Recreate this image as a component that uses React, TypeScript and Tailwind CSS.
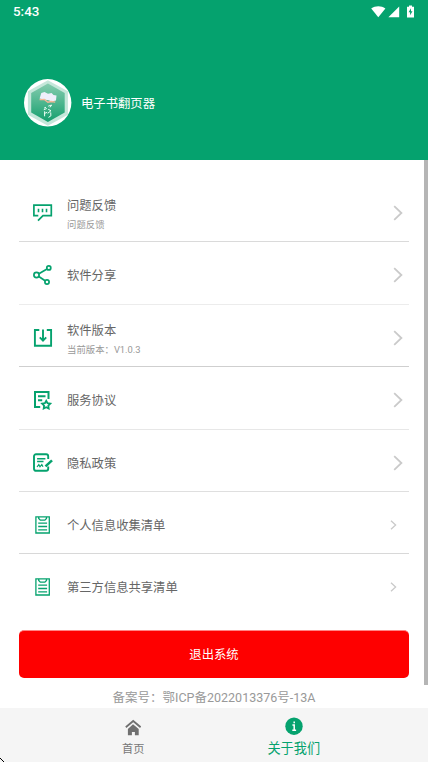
import type { ReactNode } from 'react';

const GREEN = '#05a26e';

function Feedback() {
  return (
    <svg width="20" height="20" viewBox="0 0 20 20" fill="none" stroke={GREEN} strokeWidth="1.7">
      <path d="M5.3 12.7H.9V2.2h17.4v10.5H10L5 17.7" />
      <path d="M5.5 5.7v3.6M9.5 5.7v3.6M13.5 5.7v3.6" strokeWidth="1.6" />
    </svg>
  );
}

function Share() {
  return (
    <svg width="20" height="20" viewBox="0 0 20 20" fill="none" stroke={GREEN} strokeWidth="1.7">
      <circle cx="3.5" cy="10" r="2.6" />
      <circle cx="15.8" cy="2.9" r="2" />
      <circle cx="14" cy="17" r="2.1" />
      <path d="M5.9 8.7 14 4M5.8 11.5l6.3 4.2" />
    </svg>
  );
}

function Version() {
  return (
    <svg width="20" height="20" viewBox="0 0 20 20" fill="none" stroke={GREEN} strokeWidth="1.9">
      <path d="M6.3 2H1.9v15.7h16.2V2h-4.3M10 1.5v11M6.8 9.4l3.2 3.3 3.2-3.3" />
    </svg>
  );
}

function Agreement() {
  return (
    <svg width="20" height="20" viewBox="0 0 20 20" fill="none" stroke={GREEN} strokeWidth="2">
      <path d="M7.2 17H2V2h13.5v7M5 6.3h7.5M5 10.2h4.2" />
      <path d="m13.2 10.8 1.3 2.4 2.8.5-2 2 .4 2.8-2.5-1.3-2.5 1.3.4-2.8-2-2 2.8-.5z" strokeWidth="1.8" />
    </svg>
  );
}

function Privacy() {
  return (
    <svg width="20" height="20" viewBox="0 0 20 20" fill="none" stroke={GREEN} strokeWidth="1.9">
      <path d="M15.2 13.5v2.3a2 2 0 0 1-2 2H3a2 2 0 0 1-2-2V3.3a2 2 0 0 1 2-2h10.2a2 2 0 0 1 2 2V6" />
      <path d="M4.1 5.7h8.3M4.1 8.5h6.4" strokeWidth="1.6" />
      <path d="m4 14 1.8-2.4 1.2 2.2 1.8-2.2 1.2 2.2" strokeWidth="1.2" />
      <path d="m12.5 13.3 6.5-6" strokeWidth="2.5" />
    </svg>
  );
}

function Checklist() {
  return (
    <svg width="20" height="20" viewBox="0 0 20 20" fill="none" stroke={GREEN} strokeWidth="1.3">
      <path d="M2.9 1.8h13.4v16.2H2.9z" />
      <path d="M5.7 2v1.4l1.6 1.7h4.6l1.6-1.7V2M5.2 8.2h8.9M5.2 11.5h8.9M5.2 14.8h8.9" />
    </svg>
  );
}

type Item = { title: string; detail?: string; icon: ReactNode; row: string; small?: boolean };

const items: Item[] = [
  { title: '问题反馈', detail: '问题反馈', icon: <Feedback />, row: 'h-[63px] border-[#dadada] pt-[5px]' },
  { title: '软件分享', icon: <Share />, row: 'h-[63px] border-[#ececec] pt-[4px]' },
  { title: '软件版本', detail: '当前版本：V1.0.3', icon: <Version />, row: 'h-[62px] border-[#cfcfcf] pt-[4px]' },
  { title: '服务协议', icon: <Agreement />, row: 'h-[63px] border-[#e7e7e7] pt-[4px]' },
  { title: '隐私政策', icon: <Privacy />, row: 'h-[62px] border-[#dfdfdf] pt-[5px]' },
  { title: '个人信息收集清单', icon: <Checklist />, row: 'h-[62px] border-[#d8d8d8] pt-[5px]', small: true },
  { title: '第三方信息共享清单', icon: <Checklist />, row: 'h-[63px] border-transparent pt-[4px]', small: true },
];

function Row({ item }: { item: Item }) {
  return (
    <li className={`flex items-center border-b pl-[14px] ${item.row}`}>
      {item.icon}
      <div className="ml-[14px] flex-1">
        <div className="pt-[2px] text-[12.3px] leading-[18px] text-[#666]">{item.title}</div>
        {item.detail && <div className="mt-[3px] text-[9.4px] leading-[13px] text-[#999]">{item.detail}</div>}
      </div>
      {item.small ? (
        <svg className="mr-[12px]" width="7" height="10" viewBox="0 0 7 10" fill="none" stroke="#cacaca" strokeWidth="1.3">
          <path d="m1 .7 4.6 4.3L1 9.3" />
        </svg>
      ) : (
        <svg className="mr-[6px]" width="10" height="16" viewBox="0 0 10 16" fill="none" stroke="#cacaca" strokeWidth="1.8">
          <path d="M1.2 1.2 8.4 8l-7.2 6.8" />
        </svg>
      )}
    </li>
  );
}

function Avatar() {
  return (
    <svg width="48" height="48" viewBox="0 0 48 48">
      <defs>
        <linearGradient id="hex" x1="0" y1="0" x2="0" y2="1">
          <stop offset="0" stopColor="#86ccaf" />
          <stop offset="1" stopColor="#149f6d" />
        </linearGradient>
      </defs>
      <circle cx="23.7" cy="23.8" r="23.7" fill="#fff" />
      <path d="M23.9 1.2 43.9 12.2v23.6L23.9 46.8 3.9 35.8V12.2z" fill="#c5e7da" />
      <path d="M23.9 4.6 40.7 14v19.6L23.9 43 7.2 33.6V14z" fill="url(#hex)" />
      <path d="m17.3 14 3.2-.9 3.5 1.7 3.6-.8 1.9 2 3 .6-.5 5-4.2.8-3.3-1.1-4.5-.9-4.4-1z" fill="#f0effb" />
      <path d="m15.6 20.6 4.7-.1 3.6 2.7 3.2-.7 4.1.6" fill="none" stroke="#f7b897" strokeWidth="1.3" />
      <path
        d="m20 29.2 2-1m2.2-1 3.4-1.2-1.6 2.4m-6.2 2.3 3-1.2m-2.2 2.8v5m0-2.9 2.6-1.1m1-3 2.8 1.4-3.3 2.6m3-.9.2 3.4-2.4 1.6"
        fill="none"
        stroke="#edfff6"
        strokeWidth="1"
      />
    </svg>
  );
}

export default function App() {
  return (
    <div className="flex h-[762px] w-[428px] flex-col overflow-hidden bg-white font-[Roboto,'Noto_Sans_CJK_SC',sans-serif]">
      <header className="h-[160px] shrink-0 bg-[#05a26e] text-white">
        <div className="flex h-6 items-center justify-between pr-[13px] pl-[13px]">
          <span className="pt-px text-[13.4px] font-medium">5:43</span>
          <svg width="44" height="14" viewBox="0 0 44 14" fill="#fff">
            <path d="M.2 3.6C4.4.4 10.2.4 14.4 3.6L7.3 12.2z" />
            <path d="M28.2 1.4v10.8H17.4z" />
            <path fillRule="evenodd" d="M36 1.8h2V.6h3v1.2h2v10.6h-7zm4 1.5-2.4 4h1.5v3l2.4-4h-1.5z" />
          </svg>
        </div>
        <div className="mt-[55px] flex h-12 items-center gap-[9px] pl-6">
          <Avatar />
          <span className="pt-[2px] text-[12.35px]">电子书翻页器</span>
        </div>
      </header>
      <main className="flex h-[548px] items-start">
        <div className="flex w-[424px] flex-col pr-[15px] pl-[19px]">
          <ul className="mt-[19px]">
            {items.map((item) => (
              <Row key={item.title} item={item} />
            ))}
          </ul>
          <button className="mt-[13px] h-[48px] rounded-[5px] border-t border-[#ff8585] bg-[#fe0000] pt-[2px] text-[12.35px] text-white">
            退出系统
          </button>
          <p className="mt-[11px] text-center text-[12.5px] leading-[18px] text-[#999]">备案号：鄂ICP备2022013376号-13A</p>
        </div>
        <div className="h-[525px] w-[4px] bg-[#b5b5b5]" />
      </main>
      <nav className="relative flex h-[54px] shrink-0 bg-[#f5f5f5] pr-[54px] pl-[53px]">
        <a className="flex flex-1 flex-col items-center pt-[11px] text-[#707070]">
          <svg width="16" height="17" viewBox="0 0 16 17" fill="currentColor">
            <path d="M8 5.3 13.7 10v6.3H9.9v-3.3H6.9v3.3H2.9V10z" />
            <path d="M.8 8.2 8.2 2l7.4 6.2" fill="none" stroke="currentColor" strokeWidth="1.8" />
          </svg>
          <span className="mt-[5px] text-[11.2px] leading-[17px] text-[#777]">首页</span>
        </a>
        <a className="flex flex-1 flex-col items-center pt-[9px] text-[#05a26e]">
          <svg width="18" height="18" viewBox="0 0 18 18">
            <circle cx="9" cy="9.2" r="8.7" fill="currentColor" />
            <path d="M7.4 7.9h1.8v5M7.3 13.2h3.8M9.2 4.5v1.8" stroke="#fff" strokeWidth="1.5" fill="none" />
          </svg>
          <span className="mt-[4px] text-[13.2px] leading-[20px]">关于我们</span>
        </a>
        <svg className="absolute bottom-0 left-0" width="4" height="5" viewBox="0 0 4 5">
          <path d="M0 1h1v1h1v1h1v1h1v1H3V4H2V3H1V2H0z" fill="#000" />
        </svg>
      </nav>
    </div>
  );
}
